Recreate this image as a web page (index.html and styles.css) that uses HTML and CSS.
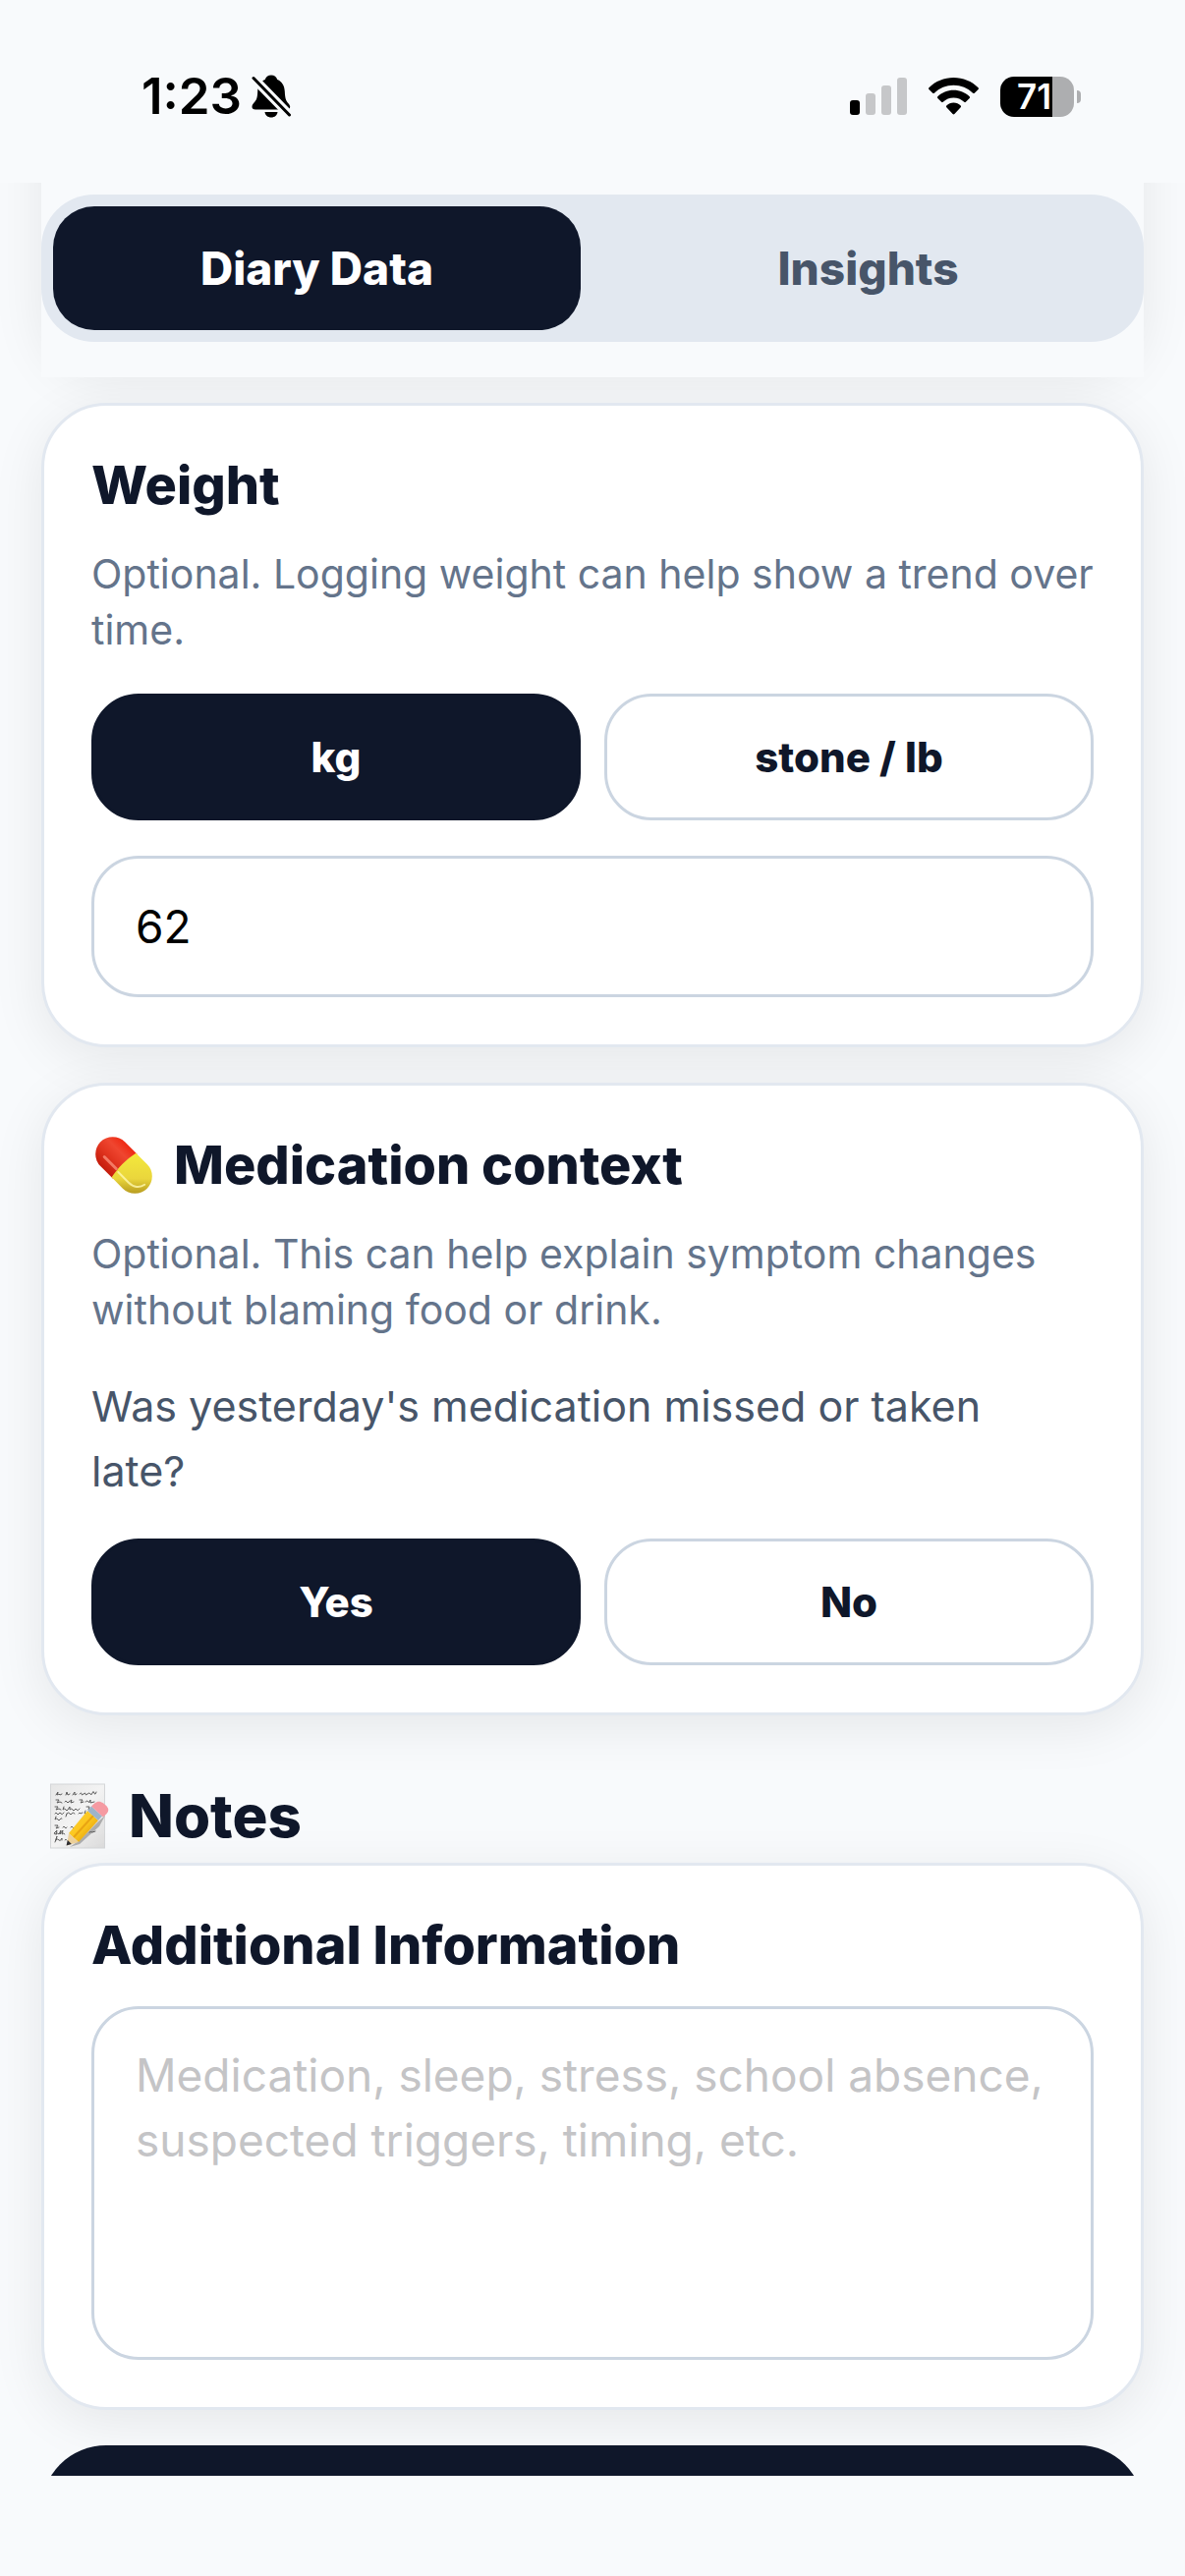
FILE: index.html
```html
<!DOCTYPE html>
<html lang="en">
<head>
<meta charset="utf-8">
<meta name="viewport" content="width=device-width, initial-scale=1">
<title>Diary</title>
<link rel="stylesheet" href="styles.css">
</head>
<body>
<div class="app">
  <header class="status">
    <div class="status-left">
      <span class="clock">1:23</span>
      <svg class="bell" viewBox="0 0 40 44" aria-label="Silent mode" role="img">
        <path d="M20 0.500c3.200 0 5.600 2 6.200 4.500 5 2 7.300 6.500 7.600 12 .3 7 1.200 9.500 3.400 12 1.300 1.400 2 2.600 2 3.800 0 1.700-1.200 2.700-3.200 2.700H4c-2.200 0-3.500-1-3.500-2.700 0-2.200 1.400-3.500 2.900-5.300 2-2.400 2.600-4.500 2.800-10.500.2-5.500 2.600-10 7.600-12C14.400 2.500 16.800.5 20 .5z"/>
        <path d="M13.500 38h13c-.4 3.300-3 5.500-6.500 5.500s-6.100-2.200-6.500-5.500z"/>
        <path class="bell-gap" d="M2 3.500 38.500 41"/>
        <path class="bell-slash" d="M2 3.500 38.500 41"/>
      </svg>
    </div>
    <div class="status-right">
      <svg class="signal" viewBox="0 0 58 38" aria-label="Signal" role="img">
        <rect x="0" y="23" width="10" height="15" rx="3"/>
        <rect class="dim" x="16" y="16" width="10" height="22" rx="3"/>
        <rect class="dim" x="32" y="8" width="10" height="30" rx="3"/>
        <rect class="dim" x="48" y="0" width="10" height="38" rx="3"/>
      </svg>
      <svg class="wifi" viewBox="0 0 51 38" aria-label="Wi-Fi" role="img">
        <path d="M25.500 0C35 0 44 3.700 50.600 10.200c.5.500.5 1.200 0 1.700l-3.800 3.800c-.5.500-1.200.5-1.700 0C39.900 10.500 33 7.700 25.500 7.700S11.100 10.500 5.900 15.700c-.5.500-1.200.5-1.700 0L.4 11.900c-.5-.5-.5-1.200 0-1.700C7 3.700 16 0 25.500 0z"/>
        <path d="M25.500 12.800c6.200 0 11.900 2.400 16.200 6.500.5.500.5 1.200 0 1.700l-3.800 3.800c-.5.500-1.200.5-1.700 0-2.900-2.700-6.700-4.200-10.700-4.200s-7.800 1.500-10.700 4.200c-.5.500-1.200.5-1.700 0L9.300 21c-.5-.5-.5-1.200 0-1.700 4.300-4.100 10-6.500 16.200-6.500z"/>
        <path d="M25.500 25.600c2.800 0 5.300 1.100 7.200 2.900.5.500.5 1.200 0 1.700l-6.300 6.900c-.5.500-1.300.5-1.800 0l-6.300-6.900c-.5-.5-.5-1.200 0-1.700 1.900-1.800 4.400-2.900 7.200-2.900z"/>
      </svg>
      <div class="battery">
        <span class="battery-body">71</span>
        <span class="battery-tip"></span>
      </div>
    </div>
  </header>

  <main class="scroll">
    <nav class="tabs-wrap">
      <div class="tabs">
        <button class="tab tab-on" type="button">Diary Data</button>
        <button class="tab" type="button">Insights</button>
      </div>
    </nav>

    <div class="card card-under"></div>

    <section class="card">
      <h2 class="card-title"><label for="weight">Weight</label></h2>
      <p class="hint">Optional. Logging weight can help show a trend over time.</p>
      <div class="choices">
        <button class="choice choice-on" type="button">kg</button>
        <button class="choice" type="button">stone / lb</button>
      </div>
      <input class="field" id="weight" type="text" inputmode="decimal" value="62">
    </section>

    <section class="card">
      <h2 class="card-title">
        <svg class="pill" viewBox="-4 0 62 58" aria-hidden="true">
          <defs>
            <linearGradient id="pillRed" x1="0" y1="0" x2="0" y2="1">
              <stop offset="0" stop-color="#ee2a14"/><stop offset=".3" stop-color="#ef4630"/><stop offset=".6" stop-color="#e23520"/><stop offset="1" stop-color="#c41c0c"/>
            </linearGradient>
            <linearGradient id="pillYellow" x1="0" y1="0" x2="1" y2="1">
              <stop offset="0" stop-color="#f4ea3c"/><stop offset=".55" stop-color="#ead63c"/><stop offset="1" stop-color="#a08012"/>
            </linearGradient>
          </defs>
          <g transform="rotate(45 29 29)">
            <path d="M31 11.500H13a17.500 17.500 0 0 0 0 35h18z" fill="url(#pillRed)"/>
            <path d="M29 11.500h16a17.500 17.500 0 0 1 0 35H29c-2.500-11-2.500-24 0-35z" fill="url(#pillYellow)"/>
            <path d="M9 37h17" stroke="#ff9a86" stroke-width="3" stroke-linecap="round" opacity=".7"/>
            <path d="M30 38h15c7 0 12-4 13-10" fill="none" stroke="#fff9b0" stroke-width="2" stroke-linecap="round" opacity=".8"/>
          </g>
        </svg>
        Medication context
      </h2>
      <p class="hint">Optional. This can help explain symptom changes without blaming food or drink.</p>
      <p class="question">Was yesterday's medication missed or taken late?</p>
      <div class="choices">
        <button class="choice choice-on" type="button">Yes</button>
        <button class="choice" type="button">No</button>
      </div>
    </section>

    <h1 class="section-title">
      <svg class="memo" viewBox="0 0 60 67" aria-hidden="true">
        <defs>
          <linearGradient id="paper" x1="0" y1="0" x2="1" y2="1">
            <stop offset="0" stop-color="#e6e6e6"/><stop offset=".5" stop-color="#f3f3f3"/><stop offset="1" stop-color="#dcdcdc"/>
          </linearGradient>
          <linearGradient id="wood" x1="0" y1="0" x2="1" y2="1">
            <stop offset="0" stop-color="#f7ce3c"/><stop offset=".5" stop-color="#fdc71d"/><stop offset="1" stop-color="#d08a08"/>
          </linearGradient>
        </defs>
        <rect x=".5" y="1" width="55" height="65" fill="url(#paper)" stroke="#d4d6d8"/>
        <g fill="none" stroke="#5c5c5c" stroke-width="1" stroke-linecap="round">
          <path d="M6 12l2-3-1 3 2-1 1 1 2-1M16 12l1-3 1 3 2-1M23 12l2-3 0 3 2-1M30 11q2-2 2 0t2 0 2 0 2 0 3 0 2-1 2 0 2-1"/>
          <path d="M6 17h3l-2 3 3-1 2 1M15 19q1-2 2 0t2 0l3-2-1 3 3-1M30 17h3l-2 3 3-1M36 19q2-2 3 0t2-2l0 3 4-1"/>
          <path d="M5 24h3l-2 3 3-1 2 1M14 24l-1 3q2-2 3 0t2 0l2-3 0 3q2-2 3 0t2 0 2 0 3-1M37 24h3l-1 3 3-1"/>
          <path d="M5 31q1-2 2 0t2 0 2 0 3-1M17 31l-1 3M17 31q2-2 3 0t2 0 3 0M29 31q1-2 2 0l2-1M36 28l-1 3 3-1"/>
          <path d="M6 34l-1 3q2-2 3 0t2 0 2-1M5 43h3l-2 3 3-1M13 45q1-2 2 0t2 0M21 45q1-2 2 0t2 0"/>
          <path d="M6 52q-2 0-2-1l3-3-1 4q2-2 3 0l2-4-1 4 3-4-1 4q2-2 3 0M40 50q2-1 3 0l3-1M5 60l2-6-1 4q2-2 3 0t3-2l0 2M15 58q1-2 2 0"/>
        </g>
        <path d="M20 65 30 58 48 40 56 33 50 44 30 62z" fill="#555" opacity=".4"/>
        <path d="M38 28l11 10-20 22-10-9z" fill="url(#wood)"/>
        <path d="M44 33 24 55" stroke="#e8a413" stroke-width="2"/>
        <path d="M19 51l10 9-12 3.500z" fill="#ecd09a"/>
        <path d="M17.800 58l4 4L16.500 63.500z" fill="#2e2e33"/>
        <path d="M42 23.500l11 10-4 4.500-11-10z" fill="#9fb4c8"/>
        <path d="M42 23.500l3.500-3.200c2.500-2.300 6-2 8.500 0l3.500 3c2.300 2.400 2.500 5.300.2 7.700L54 34.500z" fill="#f59aa2"/>
      </svg>
      Notes
    </h1>

    <section class="card">
      <h2 class="card-title"><label for="notes">Additional Information</label></h2>
      <textarea class="field notes-field" id="notes" placeholder="Medication, sleep, stress, school absence, suspected triggers, timing, etc."></textarea>
    </section>

    <button class="save" type="button" aria-label="Save"></button>
  </main>
</div>
</body>
</html>
```
FILE: styles.css
```css
:root {
  --ink: #0f172a;
  --page: #f8fafc;
  --line: #e2e8f0;
  --line-strong: #cbd5e1;
}

* {
  box-sizing: border-box;
}

body {
  margin: 0;
  background: var(--page);
  color: var(--ink);
  font-family: Inter, "Liberation Sans", sans-serif;
}

h1,
h2,
p {
  margin: 0;
}

button,
input,
textarea {
  font: inherit;
}

.app {
  display: flex;
  flex-direction: column;
  height: 100vh;
  padding-bottom: 102px;
}

/* Status bar */

.status {
  display: flex;
  flex: none;
  justify-content: space-between;
  padding: 68px 106px 58px 144px;
  color: #000;
}

.status-left,
.status-right {
  display: flex;
  align-items: center;
  height: 60px;
}

.status-left {
  gap: 10px;
}

.status-right {
  gap: 22px;
}

.clock {
  font-size: 51px;
  font-weight: 600;
  line-height: 60px;
}

.bell {
  width: 40px;
  height: 44px;
}

.bell-gap,
.bell-slash {
  fill: none;
  stroke: #000;
  stroke-width: 3;
  stroke-linecap: round;
}

.bell-gap {
  stroke: var(--page);
  stroke-width: 9;
}

.signal {
  width: 58px;
  height: 38px;
}

.dim {
  fill: #c6c7c9;
}

.wifi {
  width: 51px;
  height: 38px;
}

.battery {
  display: flex;
  align-items: center;
  gap: 3px;
}

.battery-body {
  width: 75px;
  padding-right: 6px;
  border-radius: 14px;
  background: linear-gradient(90deg, #000 71%, #adaeb0 71%);
  color: #fff;
  font-size: 35px;
  font-weight: 600;
  line-height: 41px;
  text-align: center;
}

.battery-tip {
  width: 4px;
  height: 13px;
  border-radius: 0 6px 6px 0;
  background: #adaeb0;
}

/* Scrolling content */

.scroll {
  display: flex;
  flex: 1;
  flex-direction: column;
  min-height: 0;
  padding: 0 42px;
  overflow-y: auto;
  scrollbar-width: none;
}

.scroll > * {
  flex: none;
}

.tabs-wrap {
  position: sticky;
  top: 0;
  z-index: 1;
  padding: 12px 0 36px;
  background: var(--page);
}

.tabs {
  display: grid;
  grid-template-columns: 1fr 1fr;
  gap: 24px;
  padding: 12px;
  border-radius: 54px;
  background: var(--line);
}

.tab {
  height: 126px;
  padding: 0;
  border: 0;
  border-radius: 42px;
  background: none;
  color: #475569;
  font-size: 46px;
  font-weight: 800;
}

.tab-on {
  background: var(--ink);
  color: #fff;
}

.card {
  margin-bottom: 36px;
  padding: 48px;
  border: 3px solid var(--line);
  border-radius: 66px;
  background: #fff;
  box-shadow: 0 12px 54px rgba(0, 0, 0, .08);
}

/* Card scrolled up behind the sticky tabs */
.card-under {
  height: 320px;
  margin-top: -330px;
}

.card-title {
  display: flex;
  align-items: center;
  gap: 22px;
  margin-bottom: 30px;
  font-size: 54px;
  font-weight: 800;
  line-height: 65px;
}

.pill {
  width: 62px;
  height: 58px;
}

.hint {
  margin-bottom: 36px;
  color: #64748b;
  font-size: 41px;
  line-height: 57px;
}

.question {
  margin-bottom: 36px;
  padding-right: 48px;
  color: #475569;
  font-size: 43px;
  line-height: 66px;
}

.choices {
  display: grid;
  grid-template-columns: 1fr 1fr;
  gap: 24px;
}

.choice {
  height: 129px;
  padding: 0;
  border: 3px solid var(--line-strong);
  border-radius: 48px;
  background: #fff;
  color: var(--ink);
  font-size: 42px;
  font-weight: 800;
}

.choice-on {
  border-color: var(--ink);
  background: var(--ink);
  color: #fff;
}

.field {
  display: block;
  width: 100%;
  height: 144px;
  padding: 0 42px;
  border: 3px solid var(--line-strong);
  border-radius: 48px;
  outline: 0;
  background: #fff;
  color: #000;
  font-size: 46px;
}

.choices + .field {
  margin-top: 36px;
}

.notes-field {
  height: 360px;
  padding: 34px 42px;
  line-height: 66px;
  resize: none;
}

.notes-field::placeholder {
  color: #c4c4c6;
}

.section-title {
  display: flex;
  align-items: center;
  gap: 20px;
  margin: 30px 0 12px;
  padding-left: 9px;
  font-size: 60px;
  font-weight: 800;
  line-height: 72px;
}

.memo {
  width: 60px;
  height: 67px;
}

.save {
  height: 162px;
  border: 0;
  border-radius: 66px;
  background: var(--ink);
}
```
